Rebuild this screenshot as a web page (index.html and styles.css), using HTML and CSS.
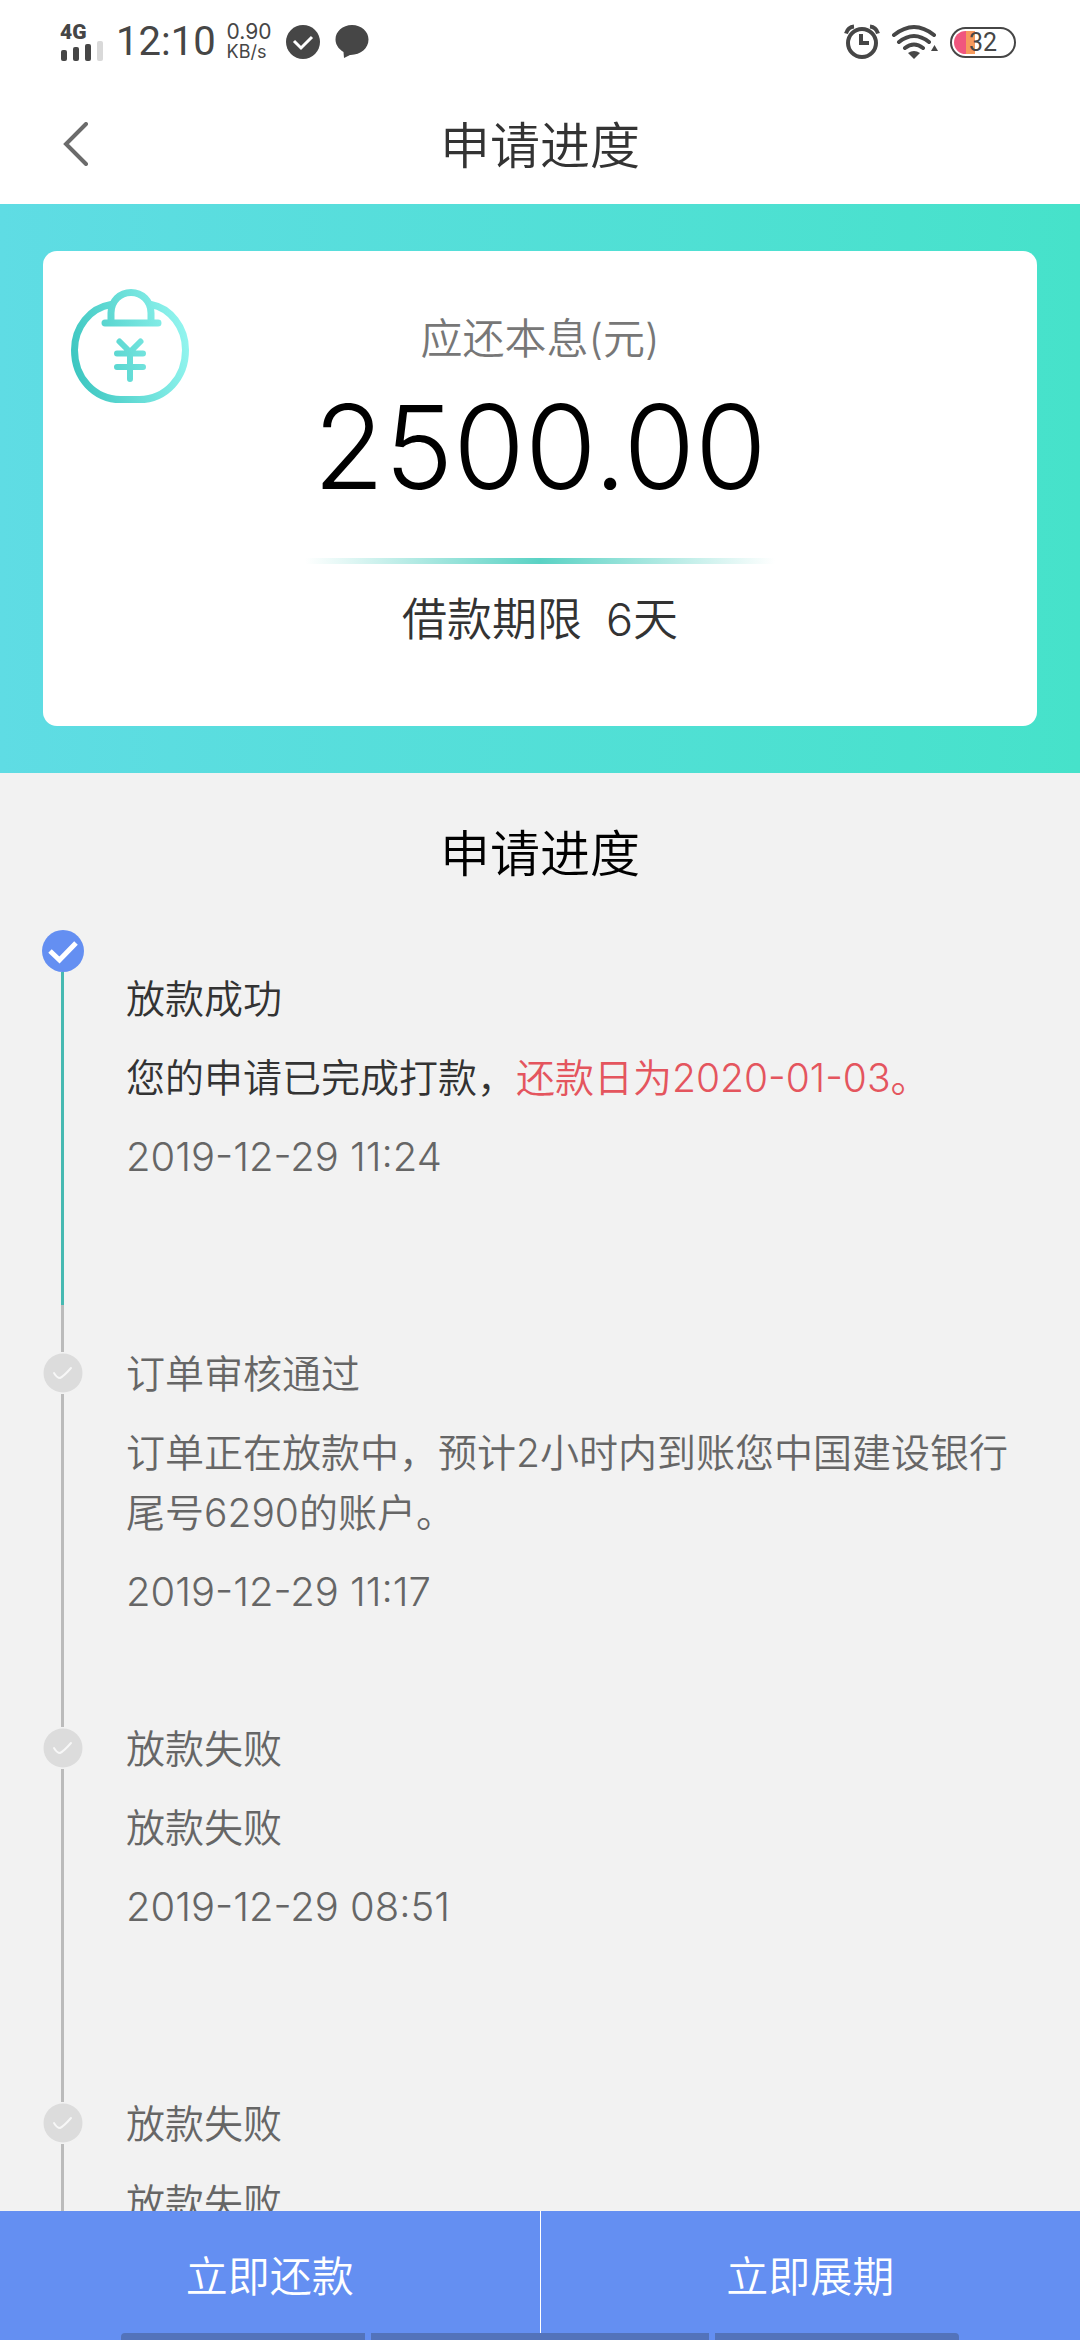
FILE: index.html
```
<!DOCTYPE html>
<html lang="zh-CN">

<head>
    <meta charset="UTF-8">
    <meta name="viewport" content="width=device-width, initial-scale=1.0">
    <title>申请进度</title>
    <link rel="stylesheet" href="styles.css">
</head>

<body>
    <!-- 状态栏 -->
    <div class="statusbar">
        <div class="signal">
            <span>4G</span>
            <svg width="44" height="20" viewBox="0 0 44 20">
                <rect x="1" y="9" width="6" height="11" rx="2" fill="#464646"/>
                <rect x="13" y="6" width="6" height="14" rx="2" fill="#464646"/>
                <rect x="25" y="3" width="6" height="17" rx="2" fill="#464646"/>
                <rect x="37" y="0" width="6" height="20" rx="2" fill="#d9d9d9"/>
            </svg>
        </div>
        <span class="clock">12:10</span>
        <div class="speed">
            <span>0.90</span>
            <span class="unit">KB/s</span>
        </div>
        <svg class="tick" width="34" height="34" viewBox="0 0 34 34">
            <circle cx="17" cy="17" r="17" fill="#464646"/>
            <path d="M8 16l7 7L26 12" fill="none" stroke="#fff" stroke-width="3"/>
        </svg>
        <svg width="34" height="34" viewBox="0 0 34 34">
            <path d="M17 0C7.600 0 .5 6.500.5 14.500c0 5 2.800 9.200 8 12.400L9 33l6-3.100c10.400.3 18.500-6.600 18.500-15.400C33.500 6.500 26.400 0 17 0z" fill="#464646"/>
        </svg>
        <div class="right">
            <svg width="36" height="36" viewBox="0 0 36 36" fill="none" stroke="#464646">
                <circle cx="18" cy="19" r="14" stroke-width="4"/>
                <path d="M17 10v9h8" stroke-width="4"/>
                <path d="M10 2.500Q4 3 2 9.500M26 2.500q6 .5 8 7" stroke-width="4"/>
            </svg>
            <svg width="48" height="36" viewBox="0 0 48 36" fill="none" stroke="#464646" stroke-width="4" stroke-linecap="round">
                <path d="M3 11q20-16 40 0M8 18q15-12 30 0M14 24q9-7 18 0"/>
                <path d="M17 29q6-4 12 0l-6 6z" fill="#464646" stroke="none"/>
                <path d="M40 27h7l-3.500-6z" fill="#464646" stroke="none"/>
            </svg>
            <div class="battery"><span>32</span></div>
        </div>
    </div>

    <!-- 标题栏 -->
    <header class="navbar">
        <a href="#" class="back" aria-label="返回">
            <svg width="26" height="44" viewBox="0 0 26 44">
                <path d="M23 2L3 22l20 20" fill="none" stroke="#6b6b6b" stroke-width="4" stroke-linecap="round"/>
            </svg>
        </a>
        <h1>申请进度</h1>
    </header>

    <!-- 还款金额 -->
    <section class="banner">
        <div class="card">
            <svg class="bag" width="118" height="114" viewBox="0 0 118 114">
                <defs>
                    <linearGradient id="bagColor" gradientUnits="userSpaceOnUse" x1="0" y1="75" x2="118" y2="50">
                        <stop offset="0" stop-color="#3cc6c0"/>
                        <stop offset="1" stop-color="#93f5ef"/>
                    </linearGradient>
                </defs>
                <g fill="none" stroke="url(#bagColor)" stroke-width="7" stroke-linecap="round" stroke-linejoin="round">
                    <path d="M40 15.500C19 19 3.500 38 3.500 61c0 28 20 49.500 46 49.500h19c26 0 46-21.500 46-49.500 0-23-15.500-42-34.500-45.500"/>
                    <path d="M40 33V24C40 12 49 3.500 60 3.500S80 12 80 24v9"/>
                    <path d="M34 34.100L87 34"/>
                    <path d="M48.500 52.500L59 63l10.500-10.500M59 63v27M46 64.500h26M46 78h26" stroke-width="6"/>
                </g>
            </svg>
            <p class="label">应还本息(元)</p>
            <p class="money">2500.00</p>
            <div class="line"></div>
            <p class="term"><span>借款期限</span><span>6天</span></p>
        </div>
    </section>

    <!-- 进度列表 -->
    <main class="progress">
        <h2>申请进度</h2>
        <ul>
            <li class="active">
                <svg class="dot" width="42" height="42" viewBox="0 0 42 42">
                    <circle cx="21" cy="21" r="21" fill="#648ff2"/>
                    <path d="M8 21l9.500 9L34 13" fill="none" stroke="#fff" stroke-width="5"/>
                </svg>
                <h3>放款成功</h3>
                <p>您的申请已完成打款，<em>还款日为2020-01-03。</em></p>
                <time>2019-12-29 11:24</time>
            </li>
            <li>
                <svg class="dot" width="42" height="42" viewBox="0 0 42 42">
                    <circle cx="21" cy="21" r="19.500" fill="#dcdcdc"/>
                    <path d="M12 21q3 5 6 5 4-2 11-10" fill="none" stroke="#f7f7f7" stroke-width="2" stroke-linecap="round"/>
                </svg>
                <h3>订单审核通过</h3>
                <p>订单正在放款中，预计2小时内到账您中国建设银行尾号6290的账户。</p>
                <time>2019-12-29 11:17</time>
            </li>
            <li>
                <svg class="dot" width="42" height="42" viewBox="0 0 42 42">
                    <circle cx="21" cy="21" r="19.500" fill="#dcdcdc"/>
                    <path d="M12 21q3 5 6 5 4-2 11-10" fill="none" stroke="#f7f7f7" stroke-width="2" stroke-linecap="round"/>
                </svg>
                <h3>放款失败</h3>
                <p>放款失败</p>
                <time>2019-12-29 08:51</time>
            </li>
            <li>
                <svg class="dot" width="42" height="42" viewBox="0 0 42 42">
                    <circle cx="21" cy="21" r="19.500" fill="#dcdcdc"/>
                    <path d="M12 21q3 5 6 5 4-2 11-10" fill="none" stroke="#f7f7f7" stroke-width="2" stroke-linecap="round"/>
                </svg>
                <h3>放款失败</h3>
                <p>放款失败</p>
            </li>
        </ul>
    </main>

    <!-- 底部按钮 -->
    <footer class="btns">
        <button type="button">立即还款</button>
        <button type="button">立即展期</button>
        <div class="keys"><i></i><i></i><i></i></div>
    </footer>
</body>

</html>
```
FILE: styles.css
```
html,
body,
ul,
li,
h1,
h2,
h3,
p {
    margin: 0;
    padding: 0;
}

h1,
h2,
h3 {
    font-weight: inherit;
}

ul {
    list-style: none;
}

em,
i {
    font-style: normal;
}

svg {
    display: block;
}

body {
    height: 100vh;
    display: flex;
    flex-direction: column;
    overflow: hidden;
    background-color: #f2f2f2;
    color: #333;
    font-family: Inter, "Noto Sans CJK SC", sans-serif;
    font-weight: 350;
}

/* 状态栏 */
.statusbar {
    display: flex;
    align-items: center;
    flex-shrink: 0;
    height: 84px;
    padding: 0 64px 0 60px;
    background-color: #fff;
    color: #464646;
    font-weight: 400;
}
.signal span{display: block;font-family: Roboto, sans-serif;font-size: 21px;line-height: 18px;font-weight: 900;}
.clock{margin-left: 12px;font-family: Roboto, sans-serif;font-size: 40px;line-height: 42px;}
.speed{margin: 0 14px 0 11px;}
.speed span{display: block;font-size: 21px;line-height: 20px;}
.speed .unit{font-size: 18px;}
.tick{margin-right: 15px;}
.right{display: flex;align-items: center;gap: 11px;margin-left: auto;}
.battery {
    box-sizing: border-box;
    width: 66px;
    height: 31px;
    padding: 2px;
    border: 2px solid #464646;
    border-radius: 16px;
}
.battery span {
    display: block;
    height: 23px;
    border-radius: 12px;
    background: linear-gradient(to right, #f0567e 12px, #f69a5c 12px, #f69a5c 21px, #fff 21px);
    font-family: Roboto, sans-serif;
    font-size: 25px;
    line-height: 23px;
    text-align: center;
}

/* 标题栏 */
.navbar {
    display: grid;
    grid-template-columns: 1fr auto 1fr;
    align-items: center;
    flex-shrink: 0;
    height: 120px;
    padding: 0 63px;
    background-color: #fff;
}
.navbar h1{padding-top: 4px;font-size: 50px;line-height: 72px;}
.back{justify-self: start;}

.banner {
    flex-shrink: 0;
    padding: 47px 43px;
    background: linear-gradient(to right, #5fdce4, #46e2ca);
}
.card {
    position: relative;
    box-sizing: border-box;
    min-height: 475px;
    padding-top: 56px;
    border-radius: 14px;
    background-color: #fff;
    text-align: center;
}
.bag{position: absolute;top: 38px;left: 28px;}
.label{font-size: 42px;line-height: 64px;color: #777;}
.money{font-size: 116px;line-height: 152px;font-weight: 300;color: #000;}
.line {
    width: 470px;
    height: 6px;
    margin: 35px auto 24px;
    background: linear-gradient(to right, #fff, #5ad2c4, #fff);
}
.term{display: flex;justify-content: center;gap: 24px;font-size: 45px;line-height: 64px;}

/* 进度 */
.progress {
    flex: 1;
    min-height: 0;
    overflow: hidden;
}
.progress h2{padding: 46px 0 41px;font-size: 50px;line-height: 70px;text-align: center;color: #000;}
.progress ul{padding: 0 43px 0 42px;}
.progress li {
    position: relative;
    display: flex;
    flex-direction: column;
    gap: 19px;
    box-sizing: border-box;
    min-height: 375px;
    padding: 39px 0 0 84px;
    font-size: 39px;
    line-height: 60px;
    color: #666;
}
.progress h3{font-size: 39px;}
.progress time{font-size: 40px;}
.progress time,.progress em{font-feature-settings: "case";}
.progress li::before{content: "";position: absolute;top: 0;bottom: 0;left: 19px;width: 3px;background-color: #bbb;}
.progress .dot{position: absolute;top: 47px;left: 0;background-color: #f2f2f2;}
.progress .active::before{background-color: #46b9b2;}
.progress .active .dot{top: 0;}
.active h3,.active p{color: #333;}
.active em{color: #e4555e;}

/* 底部 */
.btns {
    position: relative;
    display: flex;
    flex-shrink: 0;
    height: 129px;
    background-color: #648ff2;
}
.btns button {
    flex: 1;
    padding: 0 0 4px;
    border: 0;
    background: none;
    color: #fff;
    font: inherit;
    font-size: 42px;
}
.btns button:first-child{border-right: 1px solid #fff;}
.keys{position: absolute;left: 121px;right: 121px;bottom: 0;display: flex;gap: 6px;}
.keys i{flex: 244;height: 7px;background-color: #5373bb;}
.keys i:first-child{border-top-left-radius: 4px;}
.keys i:nth-child(2){flex-grow: 338;}
.keys i:last-child{border-top-right-radius: 4px;}
```
